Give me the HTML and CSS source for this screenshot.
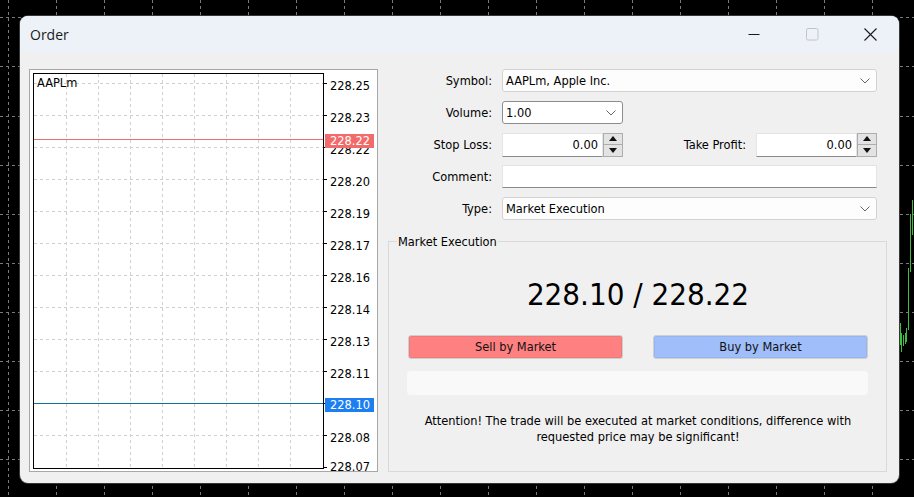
FILE: index.html
```html
<!DOCTYPE html>
<html lang="en">
<head>
<meta charset="utf-8">
<title>Order</title>
<link rel="stylesheet" href="styles.css">
</head>
<body>
<div class="desktop">
  <svg class="backdrop" width="914" height="497" viewBox="0 0 914 497">
    <g stroke="#7a7a7a" stroke-width="1" stroke-dasharray="3 3">
      <line x1="8.5" y1="0" x2="8.5" y2="497"/>
      <line x1="56.5" y1="0" x2="56.5" y2="497"/>
      <line x1="104.5" y1="0" x2="104.5" y2="497"/>
      <line x1="152.5" y1="0" x2="152.5" y2="497"/>
      <line x1="200.5" y1="0" x2="200.5" y2="497"/>
      <line x1="248.5" y1="0" x2="248.5" y2="497"/>
      <line x1="296.5" y1="0" x2="296.5" y2="497"/>
      <line x1="344.5" y1="0" x2="344.5" y2="497"/>
      <line x1="392.5" y1="0" x2="392.5" y2="497"/>
      <line x1="440.5" y1="0" x2="440.5" y2="497"/>
      <line x1="488.5" y1="0" x2="488.5" y2="497"/>
      <line x1="536.5" y1="0" x2="536.5" y2="497"/>
      <line x1="584.5" y1="0" x2="584.5" y2="497"/>
      <line x1="632.5" y1="0" x2="632.5" y2="497"/>
      <line x1="680.5" y1="0" x2="680.5" y2="497"/>
      <line x1="728.5" y1="0" x2="728.5" y2="497"/>
      <line x1="776.5" y1="0" x2="776.5" y2="497"/>
      <line x1="824.5" y1="0" x2="824.5" y2="497"/>
      <line x1="872.5" y1="0" x2="872.5" y2="497"/>
      <line x1="0" y1="17.5" x2="914" y2="17.5"/>
      <line x1="0" y1="66.5" x2="914" y2="66.5"/>
      <line x1="0" y1="116.5" x2="914" y2="116.5"/>
      <line x1="0" y1="165.5" x2="914" y2="165.5"/>
      <line x1="0" y1="214.5" x2="914" y2="214.5"/>
      <line x1="0" y1="263.5" x2="914" y2="263.5"/>
      <line x1="0" y1="312.5" x2="914" y2="312.5"/>
      <line x1="0" y1="361.5" x2="914" y2="361.5"/>
      <line x1="0" y1="410.5" x2="914" y2="410.5"/>
      <line x1="0" y1="459.5" x2="914" y2="459.5"/>
    </g>
    <g stroke="#3fbf3f" stroke-width="1">
      <line x1="900.5" y1="323" x2="900.5" y2="345"/>
      <line x1="901.5" y1="333" x2="901.5" y2="352"/>
      <line x1="903.5" y1="335" x2="903.5" y2="346"/>
      <line x1="905.5" y1="333" x2="905.5" y2="344"/>
      <line x1="906.5" y1="328" x2="906.5" y2="342"/>
      <line x1="908.5" y1="268" x2="908.5" y2="330"/>
      <line x1="910.5" y1="214" x2="910.5" y2="272"/>
      <line x1="912.5" y1="200" x2="912.5" y2="235"/>
    </g>
  </svg>

  <div class="window">
    <div class="titlebar">
      <span class="title">Order</span>
      <div class="caption">
        <span class="cap-btn">
          <svg width="12" height="12" viewBox="0 0 12 12"><line x1="0.5" y1="6.5" x2="11.5" y2="6.5" stroke="#1a1a1a" stroke-width="1"/></svg>
        </span>
        <span class="cap-btn">
          <svg width="13" height="13" viewBox="0 0 13 13"><rect x="0.5" y="0.5" width="11.5" height="11.5" rx="1.5" fill="none" stroke="#c4c4c4" stroke-width="1"/></svg>
        </span>
        <span class="cap-btn">
          <svg width="13" height="13" viewBox="0 0 13 13"><path d="M0.5 0.5 L12.5 12.5 M12.5 0.5 L0.5 12.5" stroke="#1a1a1a" stroke-width="1.1" fill="none"/></svg>
        </span>
      </div>
    </div>

    <div class="content">
      <div class="chart-panel">
        <div class="plot">
          <svg class="plot-grid" width="289" height="394" viewBox="0 0 289 394">
            <g stroke="#cfcfcf" stroke-width="1" stroke-dasharray="3 3">
              <line x1="0" y1="9.5" x2="289" y2="9.5"/>
              <line x1="0" y1="41.5" x2="289" y2="41.5"/>
              <line x1="0" y1="73.5" x2="289" y2="73.5"/>
              <line x1="0" y1="105.5" x2="289" y2="105.5"/>
              <line x1="0" y1="137.5" x2="289" y2="137.5"/>
              <line x1="0" y1="169.5" x2="289" y2="169.5"/>
              <line x1="0" y1="201.5" x2="289" y2="201.5"/>
              <line x1="0" y1="233.5" x2="289" y2="233.5"/>
              <line x1="0" y1="265.5" x2="289" y2="265.5"/>
              <line x1="0" y1="297.5" x2="289" y2="297.5"/>
              <line x1="0" y1="329.5" x2="289" y2="329.5"/>
              <line x1="0" y1="361.5" x2="289" y2="361.5"/>
              <line x1="32.5" y1="0" x2="32.5" y2="394"/>
              <line x1="64.5" y1="0" x2="64.5" y2="394"/>
              <line x1="96.5" y1="0" x2="96.5" y2="394"/>
              <line x1="128.5" y1="0" x2="128.5" y2="394"/>
              <line x1="160.5" y1="0" x2="160.5" y2="394"/>
              <line x1="192.5" y1="0" x2="192.5" y2="394"/>
              <line x1="224.5" y1="0" x2="224.5" y2="394"/>
              <line x1="256.5" y1="0" x2="256.5" y2="394"/>
            </g>
          </svg>
          <span class="price-line ask-line"></span>
          <span class="price-line bid-line"></span>
          <span class="plot-symbol">AAPLm</span>
        </div>
        <div class="axis">
          <div class="axis-row">228.25</div>
          <div class="axis-row">228.23</div>
          <div class="axis-row">228.22</div>
          <div class="axis-row">228.20</div>
          <div class="axis-row">228.19</div>
          <div class="axis-row">228.17</div>
          <div class="axis-row">228.16</div>
          <div class="axis-row">228.14</div>
          <div class="axis-row">228.13</div>
          <div class="axis-row">228.11</div>
          <div class="axis-row">228.10</div>
          <div class="axis-row">228.08</div>
          <div class="axis-row last">228.07</div>
          <span class="price-tag ask">228.22</span>
          <span class="price-tag bid">228.10</span>
        </div>
      </div>

      <div class="form">
        <div class="form-row">
          <label class="field-label">Symbol:</label>
          <div class="select wide">
            <span class="select-text">AAPLm, Apple Inc.</span>
            <svg class="chevron" width="10" height="6" viewBox="0 0 10 6"><path d="M0.5 0.5 L5 5 L9.5 0.5" fill="none" stroke="#666" stroke-width="1"/></svg>
          </div>
        </div>
        <div class="form-row">
          <label class="field-label">Volume:</label>
          <div class="select combo">
            <span class="select-text">1.00</span>
            <svg class="chevron" width="10" height="6" viewBox="0 0 10 6"><path d="M0.5 0.5 L5 5 L9.5 0.5" fill="none" stroke="#666" stroke-width="1"/></svg>
          </div>
        </div>
        <div class="form-row">
          <label class="field-label">Stop Loss:</label>
          <div class="spin">
            <span class="spin-input">0.00</span>
            <span class="spin-btns">
              <span class="spin-half"><svg width="8" height="5" viewBox="0 0 8 5"><path d="M4 0 L8 5 L0 5 Z" fill="#111"/></svg></span>
              <span class="spin-half"><svg width="8" height="5" viewBox="0 0 8 5"><path d="M0 0 L8 0 L4 5 Z" fill="#111"/></svg></span>
            </span>
          </div>
          <label class="field-label tp">Take Profit:</label>
          <div class="spin">
            <span class="spin-input">0.00</span>
            <span class="spin-btns">
              <span class="spin-half"><svg width="8" height="5" viewBox="0 0 8 5"><path d="M4 0 L8 5 L0 5 Z" fill="#111"/></svg></span>
              <span class="spin-half"><svg width="8" height="5" viewBox="0 0 8 5"><path d="M0 0 L8 0 L4 5 Z" fill="#111"/></svg></span>
            </span>
          </div>
        </div>
        <div class="form-row">
          <label class="field-label">Comment:</label>
          <div class="text-input wide"></div>
        </div>
        <div class="form-row">
          <label class="field-label">Type:</label>
          <div class="select wide">
            <span class="select-text">Market Execution</span>
            <svg class="chevron" width="10" height="6" viewBox="0 0 10 6"><path d="M0.5 0.5 L5 5 L9.5 0.5" fill="none" stroke="#666" stroke-width="1"/></svg>
          </div>
        </div>

        <div class="group">
          <span class="group-legend">Market Execution</span>
          <div class="quote">228.10 / 228.22</div>
          <div class="trade-buttons">
            <span class="trade-btn sell">Sell by Market</span>
            <span class="trade-btn buy">Buy by Market</span>
          </div>
          <div class="progress"></div>
          <p class="note">Attention! The trade will be executed at market conditions, difference with<br>requested price may be significant!</p>
        </div>
      </div>
    </div>
  </div>
</div>
</body>
</html>
```

FILE: styles.css
```css
* { box-sizing: border-box; }

html, body {
  margin: 0;
  padding: 0;
  background: #000;
}

body {
  font-family: "DejaVu Sans Condensed", "Liberation Sans", sans-serif;
  font-size: 12.7px;
  color: #000;
}

.desktop {
  position: relative;
  width: 914px;
  height: 497px;
  padding: 16px 16px 0 20px;
  overflow: hidden;
}

.backdrop {
  position: absolute;
  left: 0;
  top: 0;
}

.window {
  position: relative;
  width: 879px;
  height: 467px;
  background: #f0f0f0;
  border-radius: 8px;
  overflow: hidden;
  display: flex;
  flex-direction: column;
  box-shadow: 0 0 0 1px rgba(90, 90, 90, 0.6);
}

/* title bar */
.titlebar {
  height: 36px;
  flex: none;
  background: #edf2f9;
  display: flex;
  align-items: center;
  padding-left: 10px;
}

.title {
  font-family: "Open Sans", "Noto Sans", sans-serif;
  font-size: 14px;
  color: #1a1a1a;
  flex: 1;
  padding-top: 1px;
}

.caption {
  display: flex;
  height: 36px;
}

.cap-btn {
  width: 58px;
  height: 36px;
  display: flex;
  align-items: center;
  justify-content: center;
}

/* content */
.content {
  flex: 1;
  display: flex;
  gap: 10px;
  padding: 17px 12px 11px 9px;
}

.chart-panel {
  width: 349px;
  flex: none;
  background: #fff;
  border: 1px solid #a7a7a7;
  display: flex;
  overflow: hidden;
}

.plot {
  position: relative;
  width: 291px;
  height: 396px;
  margin: 3px 0 0 3px;
  border: 1px solid #000;
  flex: none;
}

.plot-grid {
  display: block;
}

.price-line {
  position: absolute;
  left: 0;
  right: 0;
  height: 1px;
}

.ask-line {
  top: 65px;
  background: #e37373;
}

.bid-line {
  top: 329px;
  background: #16709e;
}

.plot-symbol {
  position: absolute;
  left: 3px;
  top: 2px;
  line-height: 14px;
  color: #000;
}

.axis {
  position: relative;
  flex: 1;
  display: flex;
  flex-direction: column;
}

.axis-row {
  position: relative;
  height: 32px;
  line-height: 32px;
  padding-left: 6px;
  flex: none;
}

.axis-row::before {
  content: "";
  position: absolute;
  left: 0;
  top: 13px;
  width: 3px;
  height: 1px;
  background: #000;
}

.axis-row.last {
  height: 17px;
  line-height: 26px;
}

.price-tag {
  position: absolute;
  left: 1px;
  width: 49px;
  height: 14px;
  line-height: 14px;
  padding-left: 5px;
  color: #fff;
}

.price-tag.ask {
  top: 64px;
  background: #f26b6b;
}

.price-tag.bid {
  top: 328px;
  background: #1c7ef0;
}

/* form */
.form {
  flex: 1;
  display: flex;
  flex-direction: column;
}

.form-row {
  display: flex;
  align-items: center;
  height: 23px;
  margin-bottom: 9px;
  padding-right: 10px;
}

.field-label {
  width: 104px;
  flex: none;
  text-align: right;
  margin-right: 10px;
}

.field-label.tp {
  width: 123px;
  margin-right: 10px;
}

.select {
  height: 23px;
  background: #fdfdfd;
  border: 1px solid #d2d2d2;
  border-radius: 3px;
  display: flex;
  align-items: center;
  padding: 0 6px 0 3px;
}

.select.wide {
  flex: 1;
}

.select.combo {
  width: 121px;
  border-color: #8d8d8d;
  background: #fff;
}

.select-text {
  flex: 1;
}

.chevron {
  flex: none;
}

.spin {
  width: 121px;
  height: 24px;
  display: flex;
  flex: none;
}

.spin-input {
  flex: 1;
  background: #fff;
  border: 1px solid #e4e4e4;
  border-bottom-color: #8a8a8a;
  text-align: right;
  padding-right: 4px;
  line-height: 22px;
}

.spin-btns {
  width: 20px;
  display: flex;
  flex-direction: column;
  border: 1px solid #adadad;
  background: #e3e3e3;
}

.spin-half {
  flex: 1;
  display: flex;
  align-items: center;
  justify-content: center;
}

.spin-half + .spin-half {
  border-top: 1px solid #adadad;
}

.text-input {
  height: 23px;
  background: #fff;
  border: 1px solid #e4e4e4;
  border-bottom-color: #8a8a8a;
}

.text-input.wide {
  flex: 1;
}

/* group box */
.group {
  position: relative;
  flex: 1;
  margin-top: 12px;
  border: 1px solid #d9d9d9;
  padding: 0 18px 0 19px;
  display: flex;
  flex-direction: column;
}

.group-legend {
  position: absolute;
  left: 8px;
  top: -8px;
  line-height: 15px;
  padding: 0 1px;
  background: #f0f0f0;
}

.quote {
  margin-top: 34px;
  height: 36px;
  line-height: 36px;
  font-size: 31px;
  text-align: center;
  color: #000;
}

.trade-buttons {
  margin-top: 23px;
  display: flex;
  justify-content: space-between;
}

.trade-btn {
  width: 215px;
  height: 24px;
  line-height: 22px;
  text-align: center;
  border: 1px solid #cfcfcf;
  border-radius: 3px;
  color: #111;
}

.trade-btn.sell {
  background: #ff8080;
  box-shadow: inset 0 0 0 1px #f07a7a;
}

.trade-btn.buy {
  background: #9fbefa;
  box-shadow: inset 0 0 0 1px #95b5f2;
}

.progress {
  margin-top: 12px;
  margin-left: -1px;
  height: 24px;
  background: #f9f9f9;
  border-radius: 4px;
}

.note {
  margin: 18px 0 0;
  line-height: 16px;
  text-align: center;
}
```
